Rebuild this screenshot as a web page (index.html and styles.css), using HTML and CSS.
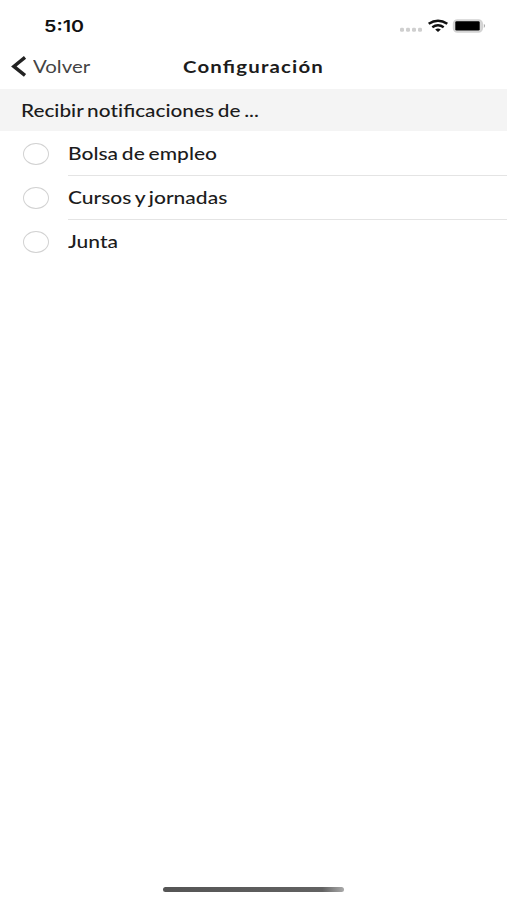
FILE: index.html
```html
<!DOCTYPE html>
<html lang="es">
<head>
<meta charset="utf-8">
<title>Configuración</title>
<link rel="stylesheet" href="styles.css">
</head>
<body>
<div class="screen">
  <header class="status">
    <span class="time wide">5:10</span>
    <svg class="indicators" width="88" height="16" viewBox="0 0 88 16">
      <g fill="#cfcfcf"><rect x="1" y="10.8" width="4" height="4" rx="1.4"/><rect x="7" y="10.8" width="4" height="4" rx="1.4"/><rect x="13" y="10.8" width="4" height="4" rx="1.4"/><rect x="19" y="10.8" width="4" height="4" rx="1.4"/></g>
      <g fill="none" stroke="#111" stroke-width="2.5"><path d="M29.7 6.8Q39 .5 48.3 6.8"/><path d="M33.3 10.2Q39 6.3 44.7 10.2"/></g>
      <path d="M36.2 12.4Q39 10.6 41.8 12.4L39 14.9Z" fill="#111"/>
      <rect x="54.6" y="3" width="28.6" height="12" rx="3.8" fill="#d8d8d8" stroke="#d2d2d2" stroke-width="1.6"/>
      <rect x="56.3" y="4.2" width="24.4" height="9.4" rx="1.4" fill="#000"/>
      <path d="M84.8 6.7Q87.4 8.8 84.8 11Z" fill="#aaa"/>
    </svg>
  </header>
  <nav class="navbar">
    <a class="back">
      <svg class="chevron" width="16" height="22" viewBox="0 0 16 22"><path d="M14 1.4L2.8 10.4L14 19.4" fill="none" stroke="#222" stroke-width="3.4"/></svg>
      <span class="back-label wide">Volver</span>
    </a>
    <h1 class="title wide">Configuración</h1>
  </nav>
  <h2 class="section"><span class="section-label wide">Recibir no<span class="plain">t</span>ificaciones de ...</span></h2>
  <ul class="list">
    <li class="row"><span class="radio"></span><div class="cell"><span class="label wide">Bolsa de empleo</span></div></li>
    <li class="row"><span class="radio"></span><div class="cell"><span class="label wide">Cursos y jornadas</span></div></li>
    <li class="row"><span class="radio"></span><div class="cell"><span class="label wide">Junta</span></div></li>
  </ul>
  <div class="home"></div>
</div>
</body>
</html>
```
FILE: styles.css
```css
* { box-sizing: border-box; margin: 0; padding: 0; }
body { background: #fff; color: #1c1c1c; font-family: Lato, "Liberation Sans", sans-serif; }
.screen { display: flex; flex-direction: column; height: 900px; overflow: hidden; }
.wide { display: inline-block; white-space: nowrap; transform: scaleX(1.2); transform-origin: left center; }
.plain { font-variant-ligatures: none; }
.status { display: flex; justify-content: space-between; align-items: flex-start; height: 45px; padding: 17px 20px 0 44px; }
.time { font: 600 16px/18px Inter, sans-serif; color: #111; transform: scaleX(1.23); }
.indicators { display: block; }
.navbar { display: grid; grid-template-columns: 183px 1fr; align-items: center; height: 44px; }
.back { display: flex; align-items: center; padding-left: 11px; }
.chevron { margin-right: 6px; }
.back-label { font-size: 17px; line-height: 22px; color: #444; }
.title { justify-self: start; font-size: 17px; line-height: 22px; font-weight: 700; letter-spacing: 0.98px; font-feature-settings: "liga" 1; }
.section { display: flex; align-items: center; height: 42px; padding: 1px 0 0 21px; background: #f4f4f4; font-weight: 500; }
.section-label { font-size: 17px; line-height: 22px; word-spacing: -1.2px; transform: scaleX(1.222); }
.list { padding-top: 1px; list-style: none; }
.row { display: flex; align-items: center; height: 44px; padding-left: 23px; }
.radio { width: 26px; height: 22px; margin-right: 19px; border: 1.5px solid #d2d2d2; border-radius: 50%; }
.cell { display: flex; align-items: center; flex: 1; height: 100%; border-bottom: 1px solid #e4e4e4; }
.row:last-child .cell { border-bottom-color: transparent; }
.label { font-size: 17px; line-height: 22px; font-weight: 500; word-spacing: -1.2px; transform: scaleX(1.235); }
.home { width: 181px; height: 5px; margin: auto auto 8px 163px; border-radius: 3px; background: linear-gradient(90deg, #555 0, #626262 88%, #aaa 100%); }
```
